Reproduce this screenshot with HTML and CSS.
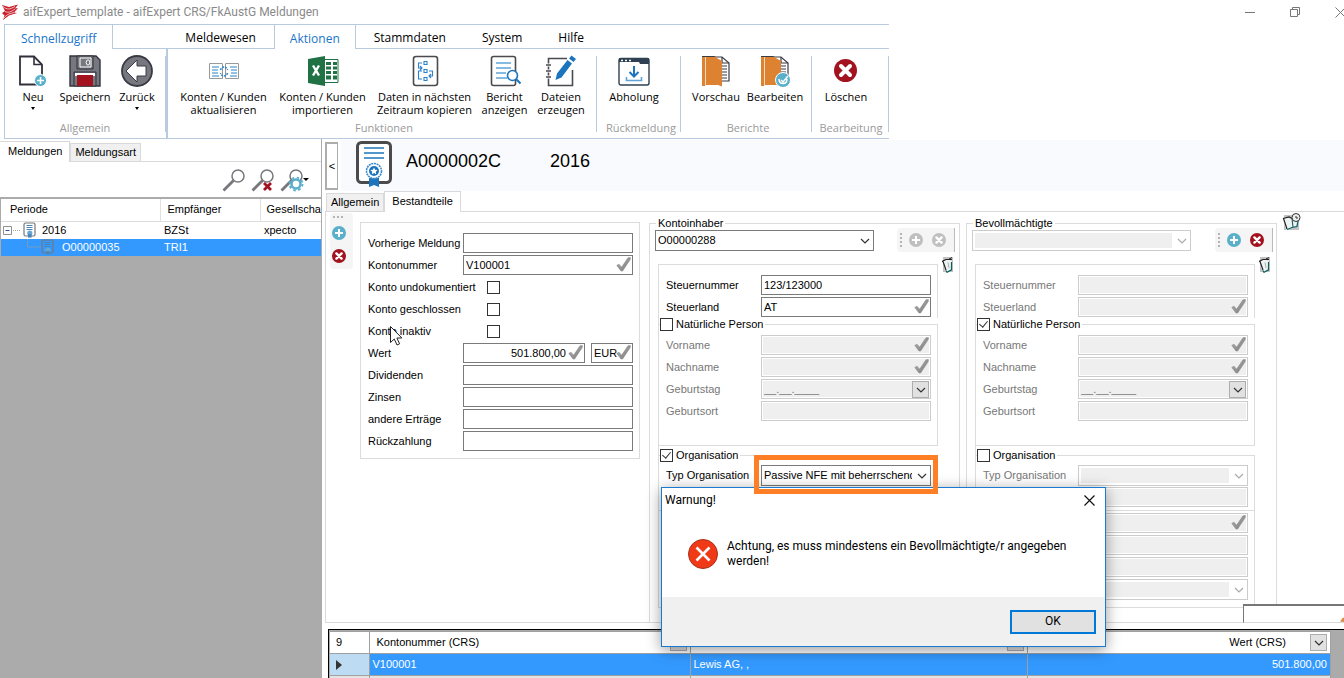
FILE: index.html
```html
<!DOCTYPE html>
<html lang="de">
<head>
<meta charset="utf-8">
<title>aifExpert_template - aifExpert CRS/FkAustG Meldungen</title>
<link rel="stylesheet" href="styles.css">
</head>
<body>
<svg class="defs" aria-hidden="true">
  <defs>
    <linearGradient id="tickfill" x1="0" y1="0" x2="1" y2="1"><stop offset="0" stop-color="#b5b5b5"/><stop offset="1" stop-color="#777"/></linearGradient>
    <symbol id="tick" viewBox="0 0 15 15"><path d="M0.8 8.4 3 7.2 5.6 10.2 12 0.8 14.4 0.6 14.2 2.6 6.6 14 5 14Z" fill="url(#tickfill)" stroke="#8a8a8a" stroke-width=".6"/></symbol>
    <symbol id="chev" viewBox="0 0 10 10"><path d="M1 3 5 7 9 3" fill="none" stroke="currentColor" stroke-width="1.2"/></symbol>
    <symbol id="plus" viewBox="0 0 14 14"><circle cx="7" cy="7" r="7" fill="currentColor"/><path d="M7 3v8M3 7h8" stroke="#fff" stroke-width="2"/></symbol>
    <symbol id="cross" viewBox="0 0 14 14"><circle cx="7" cy="7" r="7" fill="currentColor"/><path d="M4.4 4.4l5.2 5.2M9.6 4.4 4.4 9.6" stroke="#fff" stroke-width="2.4" stroke-linecap="round"/></symbol>
    <symbol id="cert" viewBox="0 0 36 46"><rect x="1.5" y="1.5" width="33" height="40" rx="4" fill="#fff" stroke="#4a4a4f" stroke-width="3"/><path d="M8 7h20M8 12h20M8 17h20" stroke="#1c75bc" stroke-width="1.6"/><path d="M13 37v9l5-2 5 2v-9z" fill="#1c75bc"/><circle cx="18" cy="30" r="7.5" fill="#fff" stroke="#3c8bcb" stroke-width="1.6" stroke-dasharray="2 .7"/><circle cx="18" cy="30" r="5" fill="#1c75bc"/><path d="m18 26.4 1.1 2.3 2.5.3-1.8 1.8.4 2.5-2.2-1.2-2.2 1.2.4-2.5-1.8-1.8 2.5-.3z" fill="#fff"/></symbol>
    <symbol id="certsmall" viewBox="0 0 14 16"><rect x="1" y="1" width="11" height="13" rx="1.5" fill="none" stroke="#77777d" stroke-width="1.2"/><path d="M3.5 3.5h6M3.5 5.5h6M3.5 7.5h6" stroke="#4c86b4" stroke-width="1"/><circle cx="6.800" cy="11" r="2.600" fill="#6aa6d2"/><path d="M5 12v3.600h3.600V12z" fill="#4a86b8"/></symbol>
    <symbol id="note" viewBox="0 0 11 17"><path d="M1 1h10v15H1z" fill="#c2c2c2"/><path d="M1 5 4 3.500 10 4.500 9 13.500 5 16 2.500 13z" fill="#eef4f4"/><path d="M0 5.500 4 3.500 10 3.500M1 5.500 4 14" stroke="#222" stroke-width="1.200" fill="none"/><path d="M4 14.500 5 16.300 9.500 13.800V6" stroke="#0b5f5f" stroke-width="1.200" fill="none"/><path d="M6 6.500 7 12" stroke="#999" stroke-width=".8"/><path d="M7 3l3-1.500" stroke="#222"/></symbol>
    <symbol id="lens" viewBox="0 0 24 24"><circle cx="16" cy="8" r="6" fill="#fff" stroke="#77777d" stroke-width="1.500"/><path d="M1.500 22.500 11.500 12.500" stroke="#77777d" stroke-width="2.800"/></symbol>
    <symbol id="book" viewBox="0 0 32 32"><path d="M13 2h9l7 6v18H16z" fill="#fff" stroke="#3a3a42" stroke-width="1.200"/><path d="M22 2v6h7" fill="none" stroke="#3a3a42" stroke-width="1.200"/><path d="M22 11h5M22 14h5M22 17h5M22 20h5M22 23h5" stroke="#3a3a42" stroke-width="1.200"/><path d="M2 1h12l2 1-4 1H2z" fill="#3a3a42"/><path d="M2 2h3v29H2z" fill="#dc8230"/><path d="M6 2h9l7 4v25.500l-4-1.500H6z" fill="#dc8230"/><path d="M5.500 2v29" stroke="#f5d9bd"/></symbol>
  </defs>
</svg>

<header class="titlebar">
  <svg class="applogo" width="16" height="16" viewBox="0 0 16 16"><path d="M0 1 7 3 16 .500 13 4.500 16 4 12 8.500 15 9 7 11.500 1 16 2.500 11.500 0 9 3 7z" fill="#c8202c"/><path d="M1 2.500C5 6 8 5.500 13 2.500M3 7.500C6 9 9 8 13 5M1.500 14.500C5 10 8 9.500 12 8.500" stroke="#fff" fill="none" stroke-width=".7"/></svg>
  <h1 class="apptitle">aifExpert_template - aifExpert CRS/FkAustG Meldungen</h1>
  <div class="winbtns">
    <button class="winbtn" aria-label="Minimieren"><svg width="11" height="11" viewBox="0 0 11 11"><path d="M0 5.500h10" stroke="#777"/></svg></button>
    <button class="winbtn" aria-label="Wiederherstellen"><svg width="11" height="11" viewBox="0 0 11 11"><path d="M.500 2.500h7v7h-7zM2.500 2.500v-2h7v7h-2" stroke="#777" fill="none"/></svg></button>
    <button class="winbtn" aria-label="Schließen"><svg width="11" height="11" viewBox="0 0 11 11"><path d="M.500 .500l10 10M10.500.500l-10 10" stroke="#777"/></svg></button>
  </div>
</header>

<section class="ribbon">
  <nav class="rtabs">
    <button class="rtab quick on">Schnellzugriff</button>
    <span class="rspace"></span>
    <button class="rtab">Meldewesen</button>
    <button class="rtab on">Aktionen</button>
    <button class="rtab">Stammdaten</button>
    <button class="rtab">System</button>
    <button class="rtab">Hilfe</button>
    <span class="rfill"></span>
  </nav>
  <div class="rbody">
    <div class="rgroup g-allg">
      <div class="rbtns">
        <button class="rbtn w52"><svg width="32" height="32" viewBox="0 0 32 32"><path d="M3 1.500h14l8 8v20H3z" fill="#fff" stroke="#30303c" stroke-width="1.800"/><path d="M17 1.500v8h8" fill="none" stroke="#30303c" stroke-width="1.600"/><circle cx="23.500" cy="25.500" r="6" fill="#5aafcb" stroke="#fff"/><path d="M23.500 22v7M20 25.500h7" stroke="#fff" stroke-width="1.600"/></svg><span>Neu</span><i class="caret"></i></button>
        <button class="rbtn w52"><svg width="32" height="32" viewBox="0 0 32 32"><path d="M1 1h26l4 4v26H1z" fill="#77777f" stroke="#33333d" stroke-width="1.400"/><path d="M8 1h16v13H8z" fill="#77777f" stroke="#33333d"/><path d="M11 3h11v9H11z" fill="#77777f" stroke="#fff"/><ellipse cx="19" cy="7.500" rx="1.800" ry="2.600" fill="none" stroke="#fff"/><path d="M5 17h22v14H5z" fill="#77777f" stroke="#33333d"/><path d="M6 18h20v3H6z" fill="#fff"/><path d="M8 20h16v11H8z" fill="#a3131f"/></svg><span>Speichern</span></button>
        <button class="rbtn w52"><svg width="32" height="32" viewBox="0 0 32 32"><circle cx="16" cy="16" r="15" fill="#77777f" stroke="#3a3a44" stroke-width="1.800"/><path d="M5 16 16 5v6h9v10h-9v6z" fill="#fff" stroke="#3a3a44"/></svg><span>Zurück</span><i class="caret"></i></button>
      </div>
      <div class="rlabel">Allgemein</div>
    </div>
    <div class="rgroup g-funk">
      <div class="rbtns">
        <button class="rbtn w98"><svg width="32" height="32" viewBox="0 0 32 32"><path d="M1.500 8.500h13v15h-13zM17.500 8.500h13v15h-13z" fill="#fff" stroke="#999"/><path d="M4 12h7M4 15h6M4 18h6M4 21h7M22 12h7M23 15h6M23 18h6M22 21h7" stroke="#2a82ca"/><path d="M12.500 15c1-4 6-4 7 0M19.500 18c-1 4-6 4-7 0" stroke="#2a82ca" stroke-width="1.500" stroke-dasharray="2 1" fill="none"/></svg><span>Konten / Kunden<br>aktualisieren</span></button>
        <button class="rbtn w98"><svg width="32" height="32" viewBox="0 0 32 32"><path d="M17 4.500h14v23H17z" fill="#fff" stroke="#207245"/><path d="M19 7h5v3h-5zM26 7h4v3h-4zM19 11.500h5v3h-5zM26 11.500h4v3h-4zM19 16h5v3h-5zM26 16h4v3h-4zM19 20.500h5v4h-5zM26 20.500h4v4h-4z" fill="#207245"/><path d="M1 4 18 1v30L1 28z" fill="#207245"/><path d="M6 10.500l6 10M12 10.500l-6 10" stroke="#fff" stroke-width="2.400"/></svg><span>Konten / Kunden<br>importieren</span></button>
        <button class="rbtn w104"><svg width="32" height="32" viewBox="0 0 32 32"><rect x="4.500" y="1.500" width="24" height="29" rx="2.500" fill="#fff" stroke="#4a4a4f" stroke-width="1.600"/><path d="M15 6.500h3v3h-3zM15 14.500h3v3h-3zM15 22.500h3v3h-3zM13 8H9.500v5H13M20 16h3.500v5H20M13 16H9.500v8H13M11 11l2 2-2 2M22 19l-2 2 2 2" stroke="#2a82ca" fill="none" stroke-width="1.100"/></svg><span>Daten in nächsten<br>Zeitraum kopieren</span></button>
        <button class="rbtn w54"><svg width="32" height="32" viewBox="0 0 32 32"><rect x="2.500" y="1.500" width="24" height="29" rx="2" fill="#fff" stroke="#4a4a4f" stroke-width="1.600"/><path d="M7 8h15M7 13h15M7 18h10M7 23h11" stroke="#5fa4d8" stroke-width="1.400"/><circle cx="23.500" cy="20.500" r="5" fill="#fff" stroke="#1c75bc" stroke-width="1.600"/><path d="M27 24l4.500 4.500" stroke="#1c75bc" stroke-width="2"/></svg><span>Bericht<br>anzeigen</span></button>
        <button class="rbtn w58"><svg width="32" height="32" viewBox="0 0 32 32"><path d="M22 3.500H3.500V30.500H27.500V15" fill="none" stroke="#4a4a4f" stroke-width="1.600"/><path d="M1 10h5M1 16h5M1 22h5" stroke="#fff" stroke-width="3"/><path d="M1 10h5M1 16h5M1 22h5" stroke="#4a4a4f" stroke-width="1.300"/><path d="M10.500 25 12 18.500 22.500 5 27 8.500 16.500 22.500z M24 3.500 26.500.500 31 4 28.500 7z" fill="#1c75bc"/></svg><span>Dateien<br>erzeugen</span></button>
      </div>
      <div class="rlabel">Funktionen</div>
    </div>
    <div class="rgroup g-rueck">
      <div class="rbtns">
        <button class="rbtn w60"><svg width="32" height="32" viewBox="0 0 32 32"><rect x="1" y="3.500" width="30" height="26.500" rx="2" fill="#fff" stroke="#2f4052" stroke-width="1.400"/><path d="M1 3h30v6h-9l-1-2H1z" fill="#2f4052"/><path d="M3 5.500h2M7 5.500h2M11 5.500h2" stroke="#fff" stroke-width="1.600"/><path d="M16 11v10M11.500 17l4.500 4.500 4.500-4.500" stroke="#1c75bc" stroke-width="2" fill="none"/><path d="M8.500 22v3.500h15V22" stroke="#5fa4d8" stroke-width="1.600" fill="none"/></svg><span>Abholung</span></button>
      </div>
      <div class="rlabel">Rückmeldung</div>
    </div>
    <div class="rgroup g-ber">
      <div class="rbtns">
        <button class="rbtn w58"><svg width="32" height="32"><use href="#book"/></svg><span>Vorschau</span></button>
        <button class="rbtn w60"><svg width="32" height="32" viewBox="0 0 32 32"><use href="#book" width="32" height="32"/><circle cx="24" cy="25" r="7.500" fill="#5aafcb" stroke="#fff"/><path d="M20 24c0 6 8 6 8 0M22 25l2 2 5-6" stroke="#fff" stroke-width="1.500" fill="none"/></svg><span>Bearbeiten</span></button>
      </div>
      <div class="rlabel">Berichte</div>
    </div>
    <div class="rgroup g-bearb">
      <div class="rbtns">
        <button class="rbtn w60"><svg width="32" height="32" viewBox="0 0 32 32"><circle cx="15.500" cy="15.500" r="11.500" fill="#a3131f"/><path d="M11 11l9 9M20 11l-9 9" stroke="#fff" stroke-width="4" stroke-linecap="round"/></svg><span>Löschen</span></button>
      </div>
      <div class="rlabel">Bearbeitung</div>
    </div>
  </div>
</section>

<div class="work">
  <aside class="side">
    <nav class="tabs sidetabs"><button class="tab on">Meldungen</button><button class="tab">Meldungsart</button></nav>
    <div class="searchbar">
      <button class="flat" aria-label="Suchen"><svg width="24" height="24"><use href="#lens"/></svg></button>
      <button class="flat" aria-label="Suche löschen"><svg width="24" height="24" viewBox="0 0 24 24"><use href="#lens" width="24" height="24"/><path d="M13 15l7 7M20 15l-7 7" stroke="#a3131f" stroke-width="2.800"/></svg></button>
      <button class="flat" aria-label="Sucheinstellungen"><svg width="24" height="24" viewBox="0 0 24 24"><use href="#lens" width="24" height="24"/><circle cx="16" cy="16" r="4.500" fill="#fff" stroke="#5aafcb" stroke-width="2.600"/><circle cx="16" cy="16" r="6.500" fill="none" stroke="#5aafcb" stroke-width="1.800" stroke-dasharray="2.500 2.600"/></svg></button>
      <i class="caret"></i>
    </div>
    <table class="tree">
      <colgroup><col class="c1"><col class="c2"><col></colgroup>
      <thead><tr><th>Periode</th><th>Empfänger</th><th>Gesellschaft</th></tr></thead>
      <tbody>
        <tr><td><div class="node"><svg width="21" height="17" viewBox="0 0 21 17"><path d="M1.500 4.500h8v8h-8z" fill="#fff" stroke="#919191"/><path d="M3.500 8.500h4" stroke="#3353a5"/><path d="M11 8.500h8" stroke="#aaa" stroke-dasharray="1 1"/></svg><svg width="14" height="16"><use href="#certsmall"/></svg><span>2016</span></div></td><td>BZSt</td><td>xpecto</td></tr>
        <tr class="sel"><td><div class="node sub"><svg width="15" height="17" viewBox="0 0 15 17"><path d="M1.500 0v8h13" fill="none" stroke="#b59d87" stroke-dasharray="1 1"/></svg><svg width="14" height="16"><use href="#certsmall"/></svg><span>O00000035</span></div></td><td>TRI1</td><td></td></tr>
      </tbody>
    </table>
  </aside>

  <main class="main">
    <div class="head">
      <button class="collapse">&lt;</button>
      <div class="headband">
        <svg width="36" height="46"><use href="#cert"/></svg>
        <h2 class="headid">A0000002C</h2><span class="headyear">2016</span>
      </div>
    </div>
    <nav class="tabs maintabs"><button class="tab">Allgemein</button><button class="tab on">Bestandteile</button></nav>
    <div class="panel">
      <div class="vstrip">
        <span class="grip"></span>
        <button class="flat blue" aria-label="Hinzufügen"><svg width="14" height="14"><use href="#plus"/></svg></button>
        <button class="flat red" aria-label="Entfernen"><svg width="14" height="14"><use href="#cross"/></svg></button>
      </div>

      <form class="box account">
        <div class="row"><label for="a1">Vorherige Meldung</label><div class="f"><input id="a1"></div></div>
        <div class="row"><label for="a2">Kontonummer</label><div class="f"><input id="a2" value="V100001"><svg class="tick"><use href="#tick"/></svg></div></div>
        <div class="row ck"><label for="a3">Konto undokumentiert</label><input type="checkbox" class="cb" id="a3"></div>
        <div class="row ck"><label for="a4">Konto geschlossen</label><input type="checkbox" class="cb" id="a4"></div>
        <div class="row ck"><label for="a5">Konto inaktiv</label><input type="checkbox" class="cb" id="a5"><svg class="cursor" width="12" height="20" viewBox="0 0 12 20"><path d="M.500.500v16l3.800-3.500 2.700 6 2.600-1.200-2.700-5.800h5z" fill="#fff" stroke="#222"/></svg></div>
        <div class="row"><label for="a6">Wert</label><div class="f"><input id="a6" class="num" value="501.800,00"><svg class="tick"><use href="#tick"/></svg></div><div class="f cur"><input aria-label="Währung" value="EUR"><svg class="tick"><use href="#tick"/></svg></div></div>
        <div class="row"><label for="a7">Dividenden</label><div class="f"><input id="a7"></div></div>
        <div class="row"><label for="a8">Zinsen</label><div class="f"><input id="a8"></div></div>
        <div class="row"><label for="a9">andere Erträge</label><div class="f"><input id="a9"></div></div>
        <div class="row"><label for="a10">Rückzahlung</label><div class="f"><input id="a10"></div></div>
      </form>

      <fieldset class="party">
        <legend>Kontoinhaber</legend>
        <div class="pick">
          <div class="f combo"><select aria-label="Kontoinhaber"><option>O00000288</option></select><svg class="chev"><use href="#chev"/></svg></div>
          <div class="hstrip"><span class="grip"></span><button class="flat off" disabled aria-label="Hinzufügen"><svg width="14" height="14"><use href="#plus"/></svg></button><button class="flat off" disabled aria-label="Entfernen"><svg width="14" height="14"><use href="#cross"/></svg></button></div>
        </div>
        <div class="details">
          <div class="inner">
            <div class="sub1">
              <div class="row"><label for="k1">Steuernummer</label><div class="f"><input id="k1" value="123/123000"></div></div>
              <div class="row"><label for="k2">Steuerland</label><div class="f"><input id="k2" value="AT"><svg class="tick"><use href="#tick"/></svg></div></div>
            </div>
            <fieldset class="sub2">
              <legend><input type="checkbox" class="cb" id="knp"><label for="knp">Natürliche Person</label></legend>
              <div class="row dis"><label for="k3">Vorname</label><div class="f"><input id="k3" disabled><svg class="tick"><use href="#tick"/></svg></div></div>
              <div class="row dis"><label for="k4">Nachname</label><div class="f"><input id="k4" disabled><svg class="tick"><use href="#tick"/></svg></div></div>
              <div class="row dis"><label for="k5">Geburtstag</label><div class="f"><input id="k5" disabled value="__.__.____"><button type="button" class="drop" aria-label="Kalender"><svg width="10" height="10"><use href="#chev"/></svg></button></div></div>
              <div class="row dis"><label for="k6">Geburtsort</label><div class="f"><input id="k6" disabled></div></div>
            </fieldset>
            <fieldset class="sub3">
              <legend><input type="checkbox" class="cb" id="kor" checked><label for="kor">Organisation</label></legend>
              <div class="row"><label for="k7">Typ Organisation</label><div class="f combo"><select id="k7"><option>Passive NFE mit beherrschenden Personen</option></select><svg class="chev"><use href="#chev"/></svg><span class="mark"></span></div></div>
            </fieldset>
            <div class="sub4"></div>
          </div>
          <svg class="noteicon" width="11" height="17"><use href="#note"/></svg>
        </div>
      </fieldset>

      <fieldset class="party second">
        <legend>Bevollmächtigte</legend>
        <div class="pick">
          <div class="f combo"><select disabled aria-label="Bevollmächtigte"><option></option></select><svg class="chev"><use href="#chev"/></svg></div>
          <div class="hstrip"><span class="grip"></span><button type="button" class="flat blue" aria-label="Hinzufügen"><svg width="14" height="14"><use href="#plus"/></svg></button><button type="button" class="flat red" aria-label="Entfernen"><svg width="14" height="14"><use href="#cross"/></svg></button></div>
        </div>
        <div class="details">
          <div class="inner">
            <div class="sub1">
              <div class="row dis"><label for="b1">Steuernummer</label><div class="f"><input id="b1" disabled></div></div>
              <div class="row dis"><label for="b2">Steuerland</label><div class="f"><input id="b2" disabled><svg class="tick"><use href="#tick"/></svg></div></div>
            </div>
            <fieldset class="sub2">
              <legend><input type="checkbox" class="cb" id="bnp" checked><label for="bnp">Natürliche Person</label></legend>
              <div class="row dis"><label for="b3">Vorname</label><div class="f"><input id="b3" disabled><svg class="tick"><use href="#tick"/></svg></div></div>
              <div class="row dis"><label for="b4">Nachname</label><div class="f"><input id="b4" disabled><svg class="tick"><use href="#tick"/></svg></div></div>
              <div class="row dis"><label for="b5">Geburtstag</label><div class="f"><input id="b5" disabled value="__.__.____"><button type="button" class="drop" aria-label="Kalender"><svg width="10" height="10"><use href="#chev"/></svg></button></div></div>
              <div class="row dis"><label for="b6">Geburtsort</label><div class="f"><input id="b6" disabled></div></div>
            </fieldset>
            <fieldset class="sub3">
              <legend><input type="checkbox" class="cb" id="bor"><label for="bor">Organisation</label></legend>
              <div class="row dis"><label for="b7">Typ Organisation</label><div class="f combo"><select id="b7" disabled><option></option></select><svg class="chev"><use href="#chev"/></svg></div></div>
              <div class="row dis lone"><div class="f"><input aria-label="Organisation" disabled></div></div>
            </fieldset>
            <div class="sub4">
              <div class="row dis lone"><div class="f"><input aria-label="Feld 1" disabled><svg class="tick"><use href="#tick"/></svg></div></div>
              <div class="row dis lone"><div class="f"><input aria-label="Feld 2" disabled></div></div>
              <div class="row dis lone"><div class="f"><input aria-label="Feld 3" disabled></div></div>
              <div class="row dis lone"><div class="f combo"><select aria-label="Feld 4" disabled><option></option></select><svg class="chev"><use href="#chev"/></svg></div></div>
            </div>
          </div>
          <svg class="noteicon" width="11" height="17"><use href="#note"/></svg>
        </div>
      </fieldset>
      <svg class="history" width="19" height="18" viewBox="0 0 19 18"><path d="M2 2h15v15H2z" fill="#c2c2c2"/><path d="M1 5 7 4 10 5 16 4 14 13 10 15 4 17z" fill="#eef4f4"/><path d="M1 5.500 7 4 10 5.500M1.500 5.500 5 16" stroke="#222" stroke-width="1.200" fill="none"/><path d="M5 16.500 10 14.500 15 13.500 16 8M10 5.500 11 14" stroke="#0b5f5f" stroke-width="1.100" fill="none"/><circle cx="14" cy="4.500" r="4" fill="#eee" stroke="#333"/><path d="M14 3v2h2" stroke="#333" fill="none"/></svg>
      <div class="corner"><svg width="4" height="5" viewBox="0 0 4 5"><path d="M0 4.500 3 .500 4 1v4z" fill="#d98a4a"/></svg></div>
    </div>

    <div class="gridwrap">
      <table class="grid">
        <colgroup><col class="n"><col class="k"><col class="l"><col></colgroup>
        <thead><tr><th>9</th><th><div class="gh"><span>Kontonummer (CRS)</span><button class="drop" aria-label="Filter"><svg width="10" height="10"><use href="#chev"/></svg></button></div></th><th><div class="gh"><span></span><button class="drop" aria-label="Filter"><svg width="10" height="10"><use href="#chev"/></svg></button></div></th><th><div class="gh right"><span>Wert (CRS)</span><button class="drop" aria-label="Filter"><svg width="10" height="10"><use href="#chev"/></svg></button></div></th></tr></thead>
        <tbody>
          <tr class="sel"><td class="rowhead"><svg width="6" height="12" viewBox="0 0 6 12"><path d="M0 1 6 6 0 11z" fill="#333"/></svg></td><td>V100001</td><td>Lewis AG, ,</td><td class="num">501.800,00</td></tr>
          <tr class="next"><td></td><td></td><td></td><td></td></tr>
        </tbody>
      </table>
    </div>
  </main>
</div>

<div class="dialog" role="alertdialog" aria-labelledby="dt">
  <div class="dtitle"><span id="dt">Warnung!</span><button class="flat" aria-label="Schließen"><svg width="11" height="11" viewBox="0 0 11 11"><path d="M.500.500l10 10M10.500.500l-10 10" stroke="#111" stroke-width="1.200"/></svg></button></div>
  <div class="dbody"><svg width="30" height="30" viewBox="0 0 30 30"><circle cx="15" cy="15" r="14.500" fill="#f03a17" stroke="#a8301b"/><path d="M8.500 8.500l13 13M21.500 8.500l-13 13" stroke="#fff" stroke-width="2.600"/></svg><p>Achtung, es muss mindestens ein Bevollmächtigte/r angegeben<br>werden!</p></div>
  <div class="dfoot"><button class="ok">OK</button></div>
</div>
</body>
</html>
```
FILE: styles.css
```css
* { box-sizing: border-box; }
body {
  margin: 0;
  height: 100vh;
  display: flex;
  flex-direction: column;
  overflow: hidden;
  background: #fff;
  color: #000;
  font: 11px/13px "Liberation Sans", Arial, sans-serif;
}
button, input, select { font: inherit; color: inherit; margin: 0; }
button { background: none; border: 0; padding: 0; }
svg { display: block; flex: none; }
h1, h2, p { margin: 0; font-weight: normal; }
fieldset { margin: 0; min-width: 0; }
.defs { position: absolute; width: 0; height: 0; }
.caret { width: 0; height: 0; border: 2px solid transparent; border-top: 3px solid #000; border-bottom: 0; }

.titlebar { display: flex; align-items: center; height: 24px; flex: none; padding-left: 2px; overflow: hidden; }
.apptitle { font: 12px/16px Roboto, sans-serif; color: #8a8a8a; margin-left: 5px; flex: 1; white-space: nowrap; }
.winbtns { display: flex; margin-right: -19px; }
.winbtn { width: 45px; display: flex; justify-content: center; align-items: center; height: 20px; }

.ribbon { flex: none; align-self: flex-start; margin-left: 4px; border: 1px solid #b8cade; border-width: 1px 0 1px 1px; font: 11px/13px "Open Sans", "Noto Sans", sans-serif; height: 115px; }
.rtabs { display: flex; height: 24px; }
.rtab { border-bottom: 1px solid #b8cade; font-size: 12px; line-height: 20px; padding: 3px 18px 0; white-space: nowrap; }
.rtab.on { color: #1a75c9; border: 1px solid #b8cade; border-width: 0 1px; padding: 3px 15px 0; }
.rtab.quick { border-left: 0; padding: 3px 16px 0; }
.rspace { width: 54px; border-bottom: 1px solid #b8cade; }
.rfill { flex: 1; border-bottom: 1px solid #b8cade; }
.rbody { display: flex; height: 89px; }
.rgroup { display: flex; flex-direction: column; padding: 6px 3px 3px 2px; background: linear-gradient(#b8cade, #b8cade) right 7px / 1px 76px no-repeat; }
.rgroup .rbtns { display: flex; flex: 1; }
.g-allg { width: 161px; }
.g-funk { width: 431px; border-left: 2px solid #b8cade; padding-left: 6px; }
.g-rueck { width: 84px; padding-left: 7px; }
.g-ber { width: 131px; padding-left: 6px; }
.g-bearb { width: 77px; padding-left: 4px; }
.rbtn { display: flex; flex-direction: column; align-items: center; flex: none; white-space: nowrap; gap: 3px; }
.rbtn span { text-align: center; }
.rbtn .caret { margin-top: 1px; }
.w52 { width: 52px; } .w54 { width: 55px; } .w58 { width: 58px; } .w60 { width: 60px; } .w98 { width: 99px; } .w104 { width: 105px; }
.rlabel { text-align: center; color: #9a9a9a; line-height: 15px; }

.work { flex: 1; display: flex; min-height: 0; }
.side { width: 322px; flex: none; background: #ababab; padding-right: 1px; }
.tabs { display: flex; align-items: flex-end; background: #fff; }
.tab { background: #f0f0f0; border: 1px solid #d9d9d9; border-bottom: 0; height: 18px; white-space: nowrap; padding: 0 4px; }
.tab.on { background: #fff; position: relative; margin-bottom: -1px; height: 21px; padding: 0 7px 2px 8px; }
.sidetabs { height: 23px; border-bottom: 1px solid #d9d9d9; }
.sidetabs .tab.on { border-left: 0; }
.searchbar { background: #fff; height: 35px; display: flex; align-items: center; justify-content: flex-end; gap: 5px; padding-right: 12px; }
.searchbar .caret { border-width: 3px 3px 0; margin-left: -6px; }
.flat { display: flex; align-items: center; justify-content: center; }
.tree { width: calc(100% - 1px); table-layout: fixed; border-collapse: collapse; margin: 2px 0 0 1px; background: #fff; }
.tree .c1 { width: 159px; } .tree .c2 { width: 100px; }
.tree th { font-weight: normal; text-align: left; height: 22px; padding: 0 0 0 7px; border-right: 1px solid #e0e0e0; border-bottom: 1px solid #ddd; white-space: nowrap; overflow: hidden; }
.tree th:first-child { padding-left: 9px; }
.tree th:last-child { border-right: 0; padding-left: 6px; }
.tree td { padding: 0 0 0 4px; height: 17px; }
.tree td:first-child { padding: 0 0 0 1px; }
.node { display: flex; align-items: center; height: 17px; }
.node span { padding-left: 5px; }
.node.sub { padding-left: 24px; }
.node.sub span { padding-left: 7px; }
.sel { background: #3399ff; color: #fff; }

.main { flex: 1; min-width: 0; display: flex; flex-direction: column; padding-left: 3px; }
.head { display: flex; gap: 3px; padding-top: 1px; height: 52px; flex: none; }
.collapse { width: 13px; height: 48px; margin-top: 2px; border: 2px solid #adadad; border-right-width: 1px; background: #fff; }
.headband { flex: 1; background: #f9fafd; display: flex; align-items: flex-start; padding: 1px 0 0 15px; font-size: 18px; line-height: 40px; }
.headid { font-size: 18px; margin-left: 14px; width: 144px; }
.maintabs { height: 21px; border-bottom: 1px solid #d9d9d9; padding-left: 1px; flex: none; }
.maintabs .tab.on { padding: 0 7px 2px; }

.panel { flex: none; height: 411px; border-left: 1px solid #d9d9d9; border-bottom: 1px solid #d9d9d9; display: flex; align-items: flex-start; position: relative; }
.vstrip { width: 23px; height: 56px; margin: 1px 0 0 4px; background: #f5f5f5; border-radius: 4px; display: flex; flex-direction: column; align-items: center; padding: 3px 6px 0 0; flex: none; }
.vstrip .grip { flex: none; width: 11px; height: 2px; background: repeating-linear-gradient(90deg, #b5b5b5 0 2px, transparent 2px 4px); margin-bottom: 8px; }
.vstrip .flat { margin-bottom: 9px; flex: none; }
.blue { color: #5aafcb; } .red { color: #a3131f; } .off { color: #c0c0c0; }
.box { border: 1px solid #dcdcdc; }
.account { width: 280px; margin: 10px 9px 0 7px; padding: 10px 6px 5px 7px; flex: none; }
.row { display: flex; height: 20px; margin-bottom: 2px; position: relative; align-items: center; }
.row > label { width: 95px; flex: none; white-space: nowrap; }
.row.ck > label { width: 119px; }
.f { flex: 1; position: relative; height: 20px; min-width: 0; }
.f input { width: 100%; height: 20px; border: 1px solid #7a7a7a; background: #fff; padding: 0 2px; display: block; border-radius: 0; }
.f .num { text-align: right; padding-right: 18px; }
.f.cur { flex: 0 0 42px; margin-left: 6px; }
.f.cur input { padding-right: 14px; }
.lone .f { margin-left: 95px; }
.tick { position: absolute; right: 2px; top: 2px; width: 15px; height: 15px; }
.cb { appearance: none; width: 13px; height: 13px; border: 1px solid #333; background: #fff; flex: none; position: relative; }
.cb:checked::after { content: ""; position: absolute; left: 3px; top: 0; width: 4px; height: 7px; border: solid #333; border-width: 0 1px 1px 0; transform: rotate(40deg); }
.cursor { position: absolute; left: 22px; top: 5px; }

.party { width: 311px; height: 406px; flex: none; border: 1px solid #dcdcdc; margin: 5px 6px 0 0; padding: 0; }
.party.second { margin-right: 5px; }
.party > legend { margin-left: 6px; padding: 0 2px; line-height: 13px; }
.pick { display: flex; justify-content: space-between; height: 34px; padding: 0 4px 0 5px; align-items: flex-start; }
.second .pick { padding: 0 3px 0 5px; }
.combo { height: 21px; }
.pick .combo { flex: 0 0 219px; }
.combo select { appearance: none; width: 100%; height: 21px; border: 1px solid #7a7a7a; border-radius: 0; background: #fff; padding: 0 18px 0 2px; display: block; overflow: hidden; text-overflow: clip; }
.chev { position: absolute; right: 4px; top: 6px; width: 10px; height: 10px; color: #333; pointer-events: none; }
.combo select:disabled { opacity: 1; border-color: #ccc; background: linear-gradient(#efefef, #efefef) 2px 2px / calc(100% - 20px) 15px no-repeat #fff; }
.combo select:disabled + .chev { color: #aaa; }
.mark { position: absolute; inset: -10px -7px -8px; border: 5px solid #ff7f27; z-index: 20; pointer-events: none; }
.hstrip { width: 58px; height: 24px; margin-top: -2px; display: flex; align-items: center; gap: 9px; padding-left: 3px; background: #f5f5f5; border-right: 1px solid #bbb; border-radius: 4px 0 0 4px; }
.hstrip .grip { width: 2px; height: 14px; background: repeating-linear-gradient(#b5b5b5 0 2px, transparent 2px 4px); margin-right: -2px; }
.details { display: flex; padding-left: 8px; }
.inner { width: 280px; height: 344px; border-left: 1px solid #dcdcdc; }
.noteicon { margin: -8px 0 0 4px; }
.sub1 { border: 1px solid #dcdcdc; border-width: 1px 1px 0 0; padding: 10px 6px 0 7px; height: 54px; }
.inner fieldset { border: 1px solid #dcdcdc; border-left: 0; padding: 4px 6px 0 7px; }
.inner legend { display: flex; align-items: center; height: 13px; padding: 0 2px 0 0; gap: 3px; margin-left: -6px; background: #fff; white-space: nowrap; }
.sub2 { height: 128px; margin-bottom: 3px; }
.sub3 { height: 62px; }
.inner .sub3 { padding-top: 3px; }
.sub3 .row:has(.combo), .sub4 .row:has(.combo) { height: 21px; margin-bottom: 1px; }
.sub4 { border-right: 1px solid #dcdcdc; border-bottom: 1px solid #dcdcdc; padding: 2px 6px 0 7px; height: 97px; }
.dis > label { color: #777; }
.dis .f input { border-color: #ccc; background: #efefef; box-shadow: inset 0 0 0 1px #fff; color: #777; }
.drop { width: 17px; height: 17px; background: #e1e1e1; border: 1px solid #adadad; display: flex; align-items: center; justify-content: center; color: #333; }
.f .drop { position: absolute; right: 2px; top: 2px; }
.history { margin-top: 1px; }
.corner { position: absolute; right: 0; bottom: -1px; width: 101px; height: 19px; background: #fff; border: 2px solid #777; border-width: 2px 0 0 1px; display: flex; justify-content: flex-end; align-items: flex-end; border-bottom: 1px solid #d9d9d9; }

.gridwrap { flex: 1; margin: 6px 0 0 3px; border: solid #000; border-width: 1px 0 0 1px; background: #ababab; padding: 1px 13px 0 1px; }
.grid { width: 100%; table-layout: fixed; border-collapse: collapse; background: #fff; }
.grid .n { width: 39px; } .grid .k { width: 321px; } .grid .l { width: 337px; }
.grid th, .grid td { border: 1px solid #a0a0a0; border-left: 0; padding: 0 3px; text-align: left; height: 22px; font-weight: normal; }
.grid tr > :first-child { padding-left: 6px; }
.grid th { padding-left: 7px; }
.gh { display: flex; justify-content: space-between; align-items: center; }
.gh.right { justify-content: flex-end; gap: 24px; }
.grid td.num { text-align: right; }
.grid td.rowhead { background: #bddcf4; }
.grid .next td { background: #e3e3e3; }

.dialog { position: absolute; left: 661px; top: 487px; width: 445px; border: 1px solid #1a7ad0; background: #fff; box-shadow: 0 3px 14px rgba(0, 0, 0, .4); z-index: 10; font: 12px/15px Roboto, sans-serif; }
.dtitle { display: flex; justify-content: space-between; align-items: center; height: 24px; padding: 0 10px 0 3px; }
.dbody { display: flex; gap: 9px; padding: 27px 20px 0 26px; height: 85px; align-items: flex-start; }
.dbody p { white-space: nowrap; }
.dfoot { background: #f0f0f0; height: 49px; display: flex; justify-content: flex-end; align-items: center; padding-right: 9px; }
.ok { width: 86px; height: 24px; border: 2px solid #0078d7; background: #e1e1e1; }
```
